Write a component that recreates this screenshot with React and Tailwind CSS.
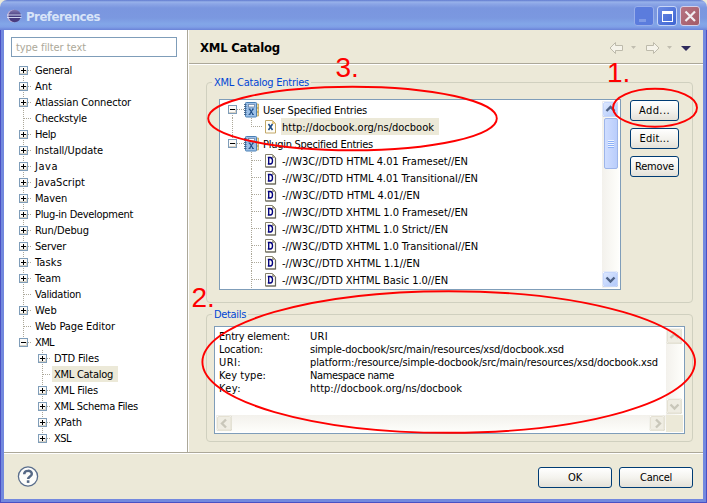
import React, { useLayoutEffect, useRef } from "react";

// Text run whose letter spacing is adjusted so that it fills `w` pixels.
function T({ w, children, className = "" }) {
  const ref = useRef(null);
  useLayoutEffect(() => {
    const el = ref.current;
    el.style.letterSpacing = "0px";
    const natural = el.getBoundingClientRect().width;
    el.style.letterSpacing = (w - natural) / el.textContent.length + "px";
  }, [w, children]);
  return (
    <span ref={ref} className={"inline-block shrink-0 whitespace-pre " + className}>
      {children}
    </span>
  );
}

const dotsY = "bg-[repeating-linear-gradient(to_bottom,#aca899_0_1px,transparent_1px_2px)]";
const dotsX = "bg-[repeating-linear-gradient(to_right,#aca899_0_1px,transparent_1px_2px)]";

function Expander({ open }) {
  return (
    <svg width="9" height="9" shapeRendering="crispEdges" className="relative shrink-0">
      <rect width="9" height="9" fill="#7f9db9" />
      <rect x="1" y="1" width="7" height="7" fill="#fbfaf8" />
      <path d="M1 7h7v1H1zM7 4h1v4H7z" fill="#d6d1c5" />
      <path d="M2 4h5v1H2z" fill="#000" />
      {!open && <path d="M4 2h1v5H4z" fill="#000" />}
    </svg>
  );
}

// One level of tree guides: dotted trunk, expander and dotted branch.
function Guide({ kind, first, last, className = "" }) {
  return (
    <span className={"grid h-full shrink-0 grid-cols-[4px_1px_1fr] grid-rows-[8px_1fr] " + className}>
      <span className={"col-start-2 row-start-1 " + (first ? "" : dotsY)} />
      <span className={"col-start-2 row-start-2 " + (last ? "" : dotsY)} />
      <span className={"col-start-3 row-start-2 h-px " + dotsX} />
      {kind && (
        <span className="col-span-3 col-start-1 row-span-2 row-start-1 pt-1">
          <Expander open={kind === "open"} />
        </span>
      )}
    </span>
  );
}

const pages = [
  ["General", 37, "plus"],
  ["Ant", 17, "plus"],
  ["Atlassian Connector", 96, "plus"],
  ["Checkstyle", 52, ""],
  ["Help", 21, "plus"],
  ["Install/Update", 68, "plus"],
  ["Java", 23, "plus"],
  ["JavaScript", 50, "plus"],
  ["Maven", 32, "plus"],
  ["Plug-in Development", 98, "plus"],
  ["Run/Debug", 54, "plus"],
  ["Server", 31, "plus"],
  ["Tasks", 27, "plus"],
  ["Team", 26, "plus"],
  ["Validation", 46, ""],
  ["Web", 22, "plus"],
  ["Web Page Editor", 80, ""],
  ["XML", 19, "open"],
];

const xmlPages = [
  ["DTD Files", 45, "plus"],
  ["XML Catalog", 59, ""],
  ["XML Files", 44, "plus"],
  ["XML Schema Files", 84, "plus"],
  ["XPath", 28, "plus"],
  ["XSL", 17, "plus"],
];

const dtds = [
  ["-//W3C//DTD HTML 4.01 Frameset//EN", 186],
  ["-//W3C//DTD HTML 4.01 Transitional//EN", 196],
  ["-//W3C//DTD HTML 4.01//EN", 138],
  ["-//W3C//DTD XHTML 1.0 Frameset//EN", 186],
  ["-//W3C//DTD XHTML 1.0 Strict//EN", 166],
  ["-//W3C//DTD XHTML 1.0 Transitional//EN", 196],
  ["-//W3C//DTD XHTML 1.1//EN", 138],
  ["-//W3C//DTD XHTML Basic 1.0//EN", 166],
];

const details = [
  ["Entry element:", 71, "URI", 18],
  ["Location:", 44, "simple-docbook/src/main/resources/xsd/docbook.xsd", 254],
  ["URI:", 22, "platform:/resource/simple-docbook/src/main/resources/xsd/docbook.xsd", 348],
  ["Key type:", 47, "Namespace name", 84],
  ["Key:", 22, "http://docbook.org/ns/docbook", 152],
];

function BookIcon() {
  return (
    <svg width="16" height="16" viewBox="0 0 16 16" className="shrink-0">
      <path d="M12 2h2.500v4h-2.500zM12 6h2.500v4h-2.500zM12 10h2.500v4h-2.500z" fill="#f3dc9a" stroke="#b79a4e" strokeWidth=".7" />
      <rect x="1.500" y=".5" width="11" height="14.500" rx=".8" fill="#9cc0e8" stroke="#4a80b5" />
      <rect x="4.500" y="2.500" width="6" height="2.500" fill="#fff" stroke="#6f87a8" strokeWidth=".8" />
      <path d="M0 2.500h2.500M0 4.500h2.500M0 6.500h2.500M0 8.500h2.500M0 10.500h2.500M0 12.500h2.500" stroke="#3d5f87" strokeWidth=".9" />
      <path d="M5.500 7l3.500 5.500M9 7l-3.500 5.500" stroke="#1f4c85" strokeWidth="1.200" />
      <path d="M4.500 7h2M8 7h2M4.500 12.500h2M8 12.500h2" stroke="#1f4c85" strokeWidth=".8" />
    </svg>
  );
}

function PageIcon({ letter }) {
  const x = letter === "X";
  return (
    <svg width="12" height="14" viewBox="0 0 12 14" className="shrink-0">
      <path d="M.5.5h7l3 3v9.500H.5z" fill="#fffef8" stroke={x ? "#c2a868" : "#85816c"} />
      {!x && <path d="M10.500 4v9H.5" fill="none" stroke="#66665c" strokeWidth="1.200" />}
      <path d="M7 .5v3.500h3.500z" fill={x ? "#e7c77b" : "#a39f8c"} />
      {x ? (
        <path d="M3.500 4l4 6M7.500 4l-4 6" stroke="#1d4b86" strokeWidth="1.500" />
      ) : (
        <path d="M3.700 3.500v6.500M2.800 3.500h2.400c1.600 0 2.300 1.200 2.300 3.250s-.7 3.250-2.300 3.250H2.800" fill="none" stroke="#00007d" strokeWidth="1.350" />
      )}
    </svg>
  );
}

const chevrons = {
  up: "M4.500 10l4-4 4 4",
  down: "M4.500 6.500l4 4 4-4",
  left: "M10 4.500l-4 4 4 4",
  right: "M7 4.500l4 4-4 4",
};

function ScrollButton({ dir, off }) {
  return (
    <svg width="17" height="17" className="shrink-0">
      <defs>
        <linearGradient id="sb" x1="0" y1="0" x2="1" y2="1">
          <stop offset="0" stopColor="#dfe9ff" />
          <stop offset="1" stopColor="#b0c8fa" />
        </linearGradient>
      </defs>
      <rect x=".5" y=".5" width="15.5" height="15.5" rx="2" fill={off ? "#d0cdbb" : "#a2b9ec"} />
      <rect x=".5" y=".5" width="15" height="15" rx="2" fill="#fff" />
      <rect x="1.5" y="1.5" width="13.5" height="13.5" rx="1.5" fill={off ? "#efede3" : "url(#sb)"} stroke={off ? "#e0dccb" : "#bccffb"} strokeWidth=".8" />
      <path d={chevrons[dir]} fill="none" stroke={off ? "#c9c7ba" : "#4d6185"} strokeWidth="2.4" />
    </svg>
  );
}

function Button({ children, w, className }) {
  return (
    <button
      className={
        "flex h-[21px] items-center justify-center rounded-[3px] border border-[#003c74] bg-gradient-to-b from-white via-[#f4f3ee] to-[#e4e1d8] " +
        className
      }
    >
      <T w={w} className="pt-px">{children}</T>
    </button>
  );
}

function Group({ title, w, className, children }) {
  return (
    <fieldset className={"relative rounded-[4px] border border-[#d0d0bf] " + className}>
      <div className="absolute top-[-7px] left-[5px] bg-[#ece9d8] px-[2px] leading-[14px] text-[#0046d5]">
        <T w={w}>{title}</T>
      </div>
      {children}
    </fieldset>
  );
}

function TitleBar() {
  return (
    <header className="flex h-[30px] items-center rounded-t-[7px] bg-[linear-gradient(to_bottom,#5f79cf_0,#98b2ea_2px,#8ba5e6_4px,#7a96df_8px,#7b98e0_18px,#82a6e8_24px,#7f9fe6_27px,#6a82d8_30px)] pt-[2px] pr-[6px] pl-[7px]">
      <svg width="15" height="15" className="shrink-0">
        <defs>
          <linearGradient id="ecl" x1="0" y1="0" x2="0" y2="1">
            <stop offset="0" stopColor="#8478ae" />
            <stop offset=".5" stopColor="#43397d" />
            <stop offset="1" stopColor="#4a3c80" />
          </linearGradient>
        </defs>
        <circle cx="6.500" cy="7" r="6.300" fill="#c3b3d6" />
        <circle cx="7.700" cy="7" r="6.200" fill="url(#ecl)" />
        <path d="M0 6h14.500M0 8.500h14.500" stroke="#dce4fa" strokeWidth=".9" />
      </svg>
      <T w={74} className="ml-[4px] pt-[2px] font-['DejaVu_Sans_Condensed',sans-serif] text-[13px] font-bold text-[#d8e4f8]">
        Preferences
      </T>
      <svg width="68" height="22" className="ml-auto shrink-0">
        <defs>
          <linearGradient id="cap" x1="0" y1="0" x2="1" y2="1">
            <stop offset="0" stopColor="#6d8ce4" />
            <stop offset="1" stopColor="#3c63d2" />
          </linearGradient>
          <linearGradient id="cls" x1="0" y1="0" x2="1" y2="1">
            <stop offset="0" stopColor="#b77484" />
            <stop offset="1" stopColor="#a35a66" />
          </linearGradient>
        </defs>
        <rect x="1.5" y="1.5" width="19" height="19" rx="2.5" fill="#5b7cdd" stroke="#98aeea" />
        <rect x="6" y="14" width="7" height="3" fill="#7f9ae6" />
        <rect x="24.500" y="1.5" width="19" height="19" rx="2.500" fill="url(#cap)" stroke="#c7d5f7" />
        <path d="M29 6h11v11H29zM30 9v7h9V9z" fill="#fff" fillRule="evenodd" />
        <rect x="47.500" y="1.5" width="19" height="19" rx="2.500" fill="url(#cls)" stroke="#d3d0ea" />
        <path d="M52.500 6.500l9.500 9.500M62 6.500l-9.500 9.500" stroke="#f2eef2" strokeWidth="2.200" />
      </svg>
    </header>
  );
}

function Sidebar() {
  return (
    <nav className="flex w-[183px] shrink-0 flex-col bg-white pt-[7px]">
      <div className="ml-[7px] flex h-5 w-[166px] items-center border border-[#7f9db9] pl-[4px] text-[#aca899]">
        <T w={70} className="pt-[2px]">type filter text</T>
      </div>
      <ul className="mt-[5px]">
        {pages.map(([name, w, kind], i) => (
          <li key={name} className="flex h-4 items-center pl-[15px]">
            <Guide kind={kind} first={i === 0} last={i === pages.length - 1} className="w-[13px]" />
            <T w={w} className="ml-[3px] pt-[2px]">{name}</T>
          </li>
        ))}
        {xmlPages.map(([name, w, kind], i) => (
          <li key={name} className="flex h-4 items-center pl-[34px]">
            <Guide kind={kind} last={i === xmlPages.length - 1} className="w-[13px]" />
            <span className={"ml-px flex h-4 items-center pr-[5px] pl-[2px] " + (kind ? "" : "bg-[#ece9d8]")}>
              <T w={w} className="pt-[2px]">{name}</T>
            </span>
          </li>
        ))}
      </ul>
    </nav>
  );
}

function PageHeader() {
  return (
    <div className="flex h-[34px] items-center border-b border-[#aca899] pt-[2px] pr-[10px] pl-[11px]">
      <T w={80} className="pt-px font-['DejaVu_Sans_Condensed',sans-serif] text-[13px] font-bold">XML Catalog</T>
      <svg width="84" height="14" className="ml-auto shrink-0">
        <g fill="#f5f3ea" stroke="#bdbaab">
          <path d="M1 7l5.500-5.500V4.500H13.500V9.500H6.500V12.500z" />
          <path d="M50 7L44.500 1.500V4.500H37.500V9.500H44.500V12.500z" />
        </g>
        <path d="M22 5h5l-2.500 3zM58 5h5l-2.500 3z" fill="#c1beb0" />
        <path d="M72 5h10l-5 5z" fill="#2e2a5c" />
      </svg>
    </div>
  );
}

function EntriesGroup() {
  return (
    <Group title="XML Catalog Entries" w={95} className="mt-[17px] flex h-[221px] gap-[9px] pt-[16px] pl-[12px]">
      <div className="flex h-[191px] w-[402px] justify-between border border-[#7f9db9] bg-white p-px">
        <ul className="pl-[7px]">
          <li className="flex h-[17px] items-center">
            <Guide kind="open" first className="w-[16px]" />
            <BookIcon />
            <T w={104} className="ml-[3px] pt-[2px]">User Specified Entries</T>
          </li>
          <li className="flex h-[17px] items-center">
            <span className={"ml-[4px] h-full w-px " + dotsY} />
            <span className="ml-[18px] flex h-full w-[11px] flex-col">
              <span className={"h-[8px] w-px " + dotsY} />
              <span className={"h-px w-full " + dotsX} />
            </span>
            <span className="ml-[3px]"><PageIcon letter="X" /></span>
            <span className="ml-[4px] flex h-[17px] items-center bg-[#ece9d8] pr-[5px] pl-px">
              <T w={152} className="pt-[2px]">http://docbook.org/ns/docbook</T>
            </span>
          </li>
          <li className="flex h-[17px] items-center">
            <Guide kind="open" last className="w-[16px]" />
            <BookIcon />
            <T w={110} className="ml-[3px] pt-[2px]">Plugin Specified Entries</T>
          </li>
          {dtds.map(([name, w]) => (
            <li key={name} className="flex h-[17px] items-center pl-[19px]">
              <Guide className="w-[15px]" />
              <span className="ml-[3px]"><PageIcon letter="D" /></span>
              <T w={w} className="ml-[5px] pt-[2px]">{name}</T>
            </li>
          ))}
        </ul>
        <div className="flex w-[17px] flex-col bg-gradient-to-r from-[#f3f1ec] to-[#fefefb]">
          <ScrollButton dir="up" />
          <div className="ml-[2px] flex h-[51px] w-[14px] items-center justify-center rounded-[2px] border border-[#9db5ea] bg-gradient-to-r from-[#cfddff] to-[#b9cdfb]">
            <div className="h-[8px] w-[6px] bg-[repeating-linear-gradient(to_bottom,#eef4fe_0_1px,#8cb0f8_1px_2px)]" />
          </div>
          <div className="mt-auto flex"><ScrollButton dir="down" /></div>
        </div>
      </div>
      <div className="flex flex-col gap-[7px] pt-px">
        <Button w={31} className="w-[49px]">Add...</Button>
        <Button w={30} className="w-[49px]">Edit...</Button>
        <Button w={39} className="w-[49px]">Remove</Button>
      </div>
    </Group>
  );
}

function DetailsGroup() {
  return (
    <Group title="Details" w={32} className="mt-[11px] h-[128px] pt-[11px] pl-[7px]">
      <div className="grid h-[108px] w-[471px] grid-cols-[1fr_17px] grid-rows-[1fr_17px] border border-[#7f9db9] bg-white p-px">
        <dl className="overflow-hidden pt-[2px] pl-[3px]">
          {details.map(([k, kw, v, vw]) => (
            <div key={k} className="flex h-[13px] items-center leading-[13px]">
              <dt className="w-[91px] shrink-0"><T w={kw}>{k}</T></dt>
              <dd className="flex"><T w={vw}>{v}</T></dd>
            </div>
          ))}
        </dl>
        <div className="flex flex-col justify-between bg-gradient-to-r from-[#f3f1ec] to-[#fefefb]">
          <ScrollButton dir="up" off />
          <ScrollButton dir="down" off />
        </div>
        <div className="flex justify-between bg-gradient-to-b from-[#f3f1ec] to-[#fefefb]">
          <ScrollButton dir="left" off />
          <ScrollButton dir="right" off />
        </div>
        <div className="bg-[#ece9d8]" />
      </div>
    </Group>
  );
}

function Annotations() {
  return (
    <svg width="707" height="503" className="pointer-events-none absolute inset-0">
      <g fill="none" stroke="#fe0000" strokeWidth="1.9">
        <ellipse cx="655" cy="107.700" rx="42" ry="19" />
        <ellipse cx="352.500" cy="118.500" rx="144.300" ry="31.800" />
        <ellipse cx="448.700" cy="362" rx="246.300" ry="70.800" />
      </g>
      <g fill="#fe0000" fontFamily="Liberation Sans, Arial, sans-serif" fontSize="28">
        <text x="607" y="82">1.</text>
        <text x="191.500" y="306.500">2.</text>
        <text x="335.500" y="77">3.</text>
      </g>
    </svg>
  );
}

export default function App() {
  return (
    <div className="relative flex h-[503px] w-[707px] flex-col overflow-hidden bg-[#ece9d8] font-['DejaVu_Sans_Condensed','DejaVu_Sans',sans-serif] text-[11px] leading-[16px] text-black">
      <div className="flex h-full flex-col">
        <TitleBar />
        <div className="flex min-h-0 flex-1 border-r border-b border-l border-[#4a50c4]">
          <div className="flex min-w-0 flex-1 flex-col border-r-3 border-b-3 border-l-3 border-[#7389de] bg-[#ece9d8]">
            <div className="flex h-[422px] shrink-0">
              <Sidebar />
              <div className="w-[2px] shrink-0 border-l border-[#aca899] bg-white" />
              <main className="flex flex-1 flex-col">
                <PageHeader />
                <div className="h-px bg-white" />
                <div className="flex flex-col pr-[10px] pl-[17px]">
                  <EntriesGroup />
                  <DetailsGroup />
                </div>
              </main>
            </div>
            <footer className="flex flex-1 items-center border-t border-[#aca899] pt-[2px] pr-[10px] pl-[13px] shadow-[inset_0_1px_0_#fff]">
              <svg width="22" height="22" className="shrink-0">
                <circle cx="11" cy="10.500" r="9.600" fill="#fdfdfb" stroke="#5a6e8c" strokeWidth="1.300" />
                <path d="M7.200 8.300c0-4.500 7.600-4.500 7.600-.4 0 2.400-3.700 2.600-3.700 5.100" fill="none" stroke="#566985" strokeWidth="2.500" />
                <rect x="9.800" y="14.300" width="2.600" height="2.600" fill="#566985" />
              </svg>
              <div className="ml-auto flex gap-[7px]">
                <Button w={14} className="w-[74px]">OK</Button>
                <Button w={32} className="w-[74px]">Cancel</Button>
              </div>
            </footer>
          </div>
        </div>
      </div>
      <Annotations />
    </div>
  );
}
